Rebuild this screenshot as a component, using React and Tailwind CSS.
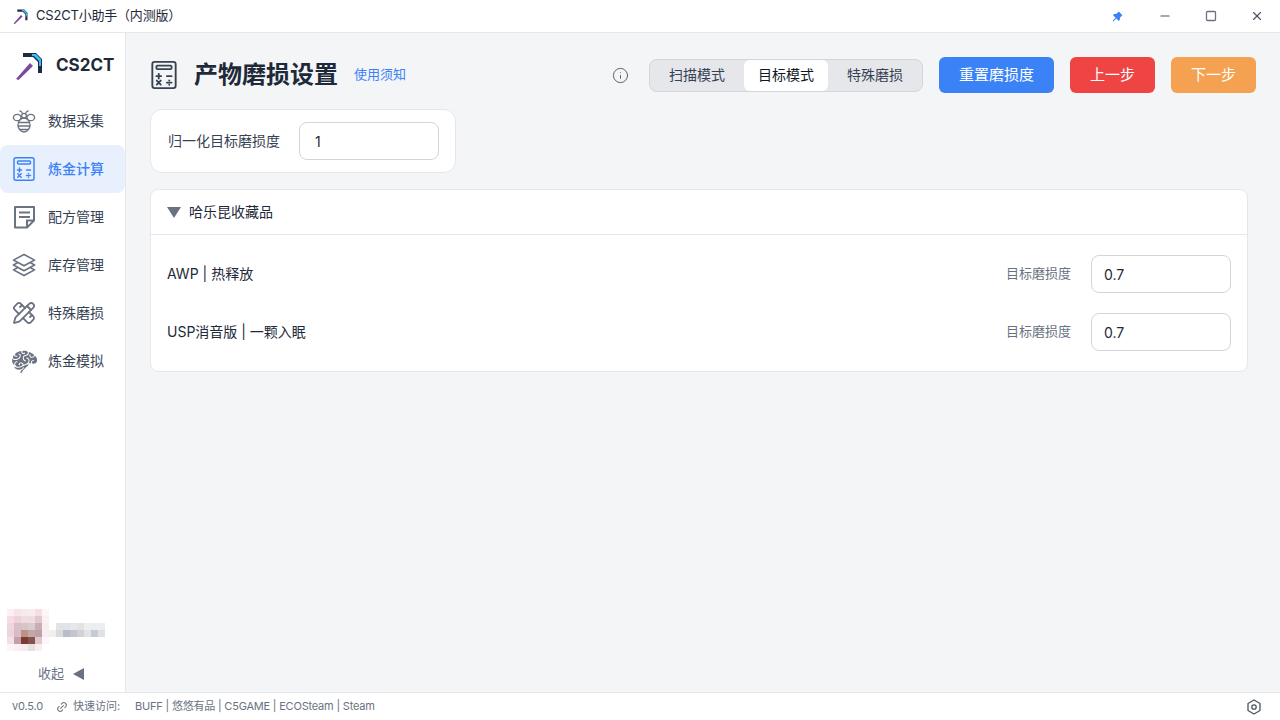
import React from 'react';
import { Minus, Square, X, PencilRuler, Info, Link2 } from 'lucide-react';
import { AiFillPushpin } from 'react-icons/ai';
import { GiBrain } from 'react-icons/gi';
import { HiOutlineSquare3Stack3D } from 'react-icons/hi2';

const fontStack = { fontFamily: '"Inter", "Noto Sans CJK SC", sans-serif' };

const Pickaxe = ({ size = 16 }) => (
    <svg width={size} height={size} viewBox="0 0 28 28" fill="none">
        <path d="M1 27 L15 11 L18 14 L3.5 28 Z" fill="#7a4a9c" />
        <path d="M8 1 H21 L27 7 V21 H23 V10 L18 5 H8 Z" fill="#1f2a44" />
        <path d="M17 2 H21 L26 7 V14 H24 V9 L19 4 H17 Z" fill="#38bdf8" />
    </svg>
);

const Calc = ({ size = 24, stroke = '#374151', width = 1.6 }) => (
    <svg width={size} height={size} viewBox="0 0 24 24" fill="none" stroke={stroke} strokeWidth={width} strokeLinecap="round">
        <rect x="2" y="0.8" width="20" height="22.4" rx="2" />
        <rect x="5.5" y="4" width="13" height="3" rx="1" />
        <path d="M5.5 13 H9.5 M7.5 11 V15 M14.5 13 H18.5 M5.8 16.8 L9.2 20.2 M9.2 16.8 L5.8 20.2 M14.5 18.5 H18.5" />
        <path d="M16.5 16.6 V16.7 M16.5 20.3 V20.4" />
    </svg>
);

const Bee = () => (
    <svg width="24" height="24" viewBox="0 0 24 24" fill="none" stroke="#6b7280" strokeWidth="1.3" strokeLinecap="round">
        <ellipse cx="12" cy="16" rx="6" ry="7" />
        <path d="M6.5 13.5 H17.5 M6.3 17 H17.7 M8.3 20.5 H15.7" />
        <circle cx="12" cy="6.8" r="2.4" />
        <ellipse cx="5.2" cy="8.5" rx="3.8" ry="3.2" />
        <ellipse cx="18.8" cy="8.5" rx="3.8" ry="3.2" />
        <path d="M10.5 4.6 C10 3 9 2 7.8 1.8 M13.5 4.6 C14 3 15 2 16.2 1.8" />
    </svg>
);

const Note = () => (
    <svg width="24" height="24" viewBox="0 0 24 24" fill="none" stroke="#6b7280" strokeWidth="2">
        <path d="M15 22.5 H3 V2 H22 V15.5 Z" strokeLinejoin="round" />
        <path d="M7 7.5 H18 M7 12 H18" />
        <path d="M15 22.5 V15.5 H22" />
    </svg>
);

const HexGear = () => (
    <svg width="16" height="16" viewBox="0 0 16 16" fill="none" stroke="#4b5563" strokeWidth="1.3">
        <path d="M8 1 L14 4.5 V11.5 L8 15 L2 11.5 V4.5 Z" strokeLinejoin="round" />
        <circle cx="8" cy="8" r="2.2" />
    </svg>
);

// pixelated avatar and name, 7px blocks as in the screenshot
const avatarBlocks = [
    ['#fdf0f3', '#f8e3e8', '#f7ebed', '#f9ecef', '#f5dfe4', '#fdf5f7'],
    ['#f5dde3', '#eed2da', '#efdcdf', '#eddde0', '#e3c7cf', '#fbf1f3'],
    ['#f0d5dc', '#d9c0c7', '#d8c3c9', '#dccbcd', '#c9adb5', '#f8eef0'],
    ['#ecd5da', '#d6bcc4', '#bd9285', '#c3a6a6', '#c0a0a8', '#f8eef0'],
    ['#f4dfe4', '#c49fa7', '#7c3a36', '#84544f', '#e2c6ce', '#fdf5f7'],
    ['#fdf4f6', '#fbeff2', '#f6ebed', '#e8e0e0', '#f9eef1', '#ffffff'],
];
const nameBlocks = [
    ['#ffffff', '#e1e3e7', '#e1e3e8', '#e6e7ea', '#e2e3e3', '#eceef0', '#eceef0', '#eceef0'],
    ['#f2f0ef', '#d9dcdb', '#b9bcc9', '#c3c6d0', '#d6d0d5', '#e0e4e2', '#c6cad6', '#dfe1e6'],
];

const PixelUser = () => (
    <svg width="112" height="42" viewBox="0 0 112 42" shapeRendering="crispEdges">
        {avatarBlocks.map((row, y) => row.map((c, x) => (
            <rect key={`a${x}${y}`} x={x * 7} y={y * 7} width="7" height="7" fill={c} />
        )))}
        {nameBlocks.map((row, y) => row.map((c, x) => (
            <rect key={`n${x}${y}`} x={42 + x * 7} y={14 + y * 7} width="7" height="7" fill={c} />
        )))}
    </svg>
);

const navItems = [
    { label: '数据采集', icon: <Bee /> },
    { label: '炼金计算', icon: <Calc stroke="#3b82f6" width={1.5} />, active: true },
    { label: '配方管理', icon: <Note /> },
    { label: '库存管理', icon: <HiOutlineSquare3Stack3D size={26} color="#6b7280" className="shrink-0" /> },
    { label: '特殊磨损', icon: <PencilRuler size={24} color="#6b7280" strokeWidth={1.8} className="shrink-0" /> },
    { label: '炼金模拟', icon: <GiBrain size={27} color="#6b7280" className="shrink-0" /> },
];

const WearInput = ({ value }) => (
    <input
        readOnly
        value={value}
        className="w-[140px] h-[38px] px-[12px] bg-white border border-gray-300 rounded-lg text-sm text-gray-800 outline-none"
    />
);

const ItemRow = ({ name }) => (
    <div className="flex items-center justify-between h-[38px]">
        <span className="text-sm text-gray-800">{name}</span>
        <div className="flex items-center gap-5">
            <span className="text-[13px] text-gray-500">目标磨损度</span>
            <WearInput value="0.7" />
        </div>
    </div>
);

export default function App() {
    return (
        <div className="w-[1280px] h-[720px] flex flex-col overflow-hidden bg-[#f4f5f7]" style={fontStack}>
            {/* title bar */}
            <div className="h-[33px] shrink-0 flex items-center bg-white border-b border-gray-200">
                <div className="flex items-center pl-[13px] gap-[8px] text-[13px] text-gray-800">
                    <Pickaxe size={15} />
                    <span className="tracking-[-0.2px]">CS2CT小助手（内测版）</span>
                </div>
                <div className="ml-auto flex items-center">
                    <div className="w-[46px] flex justify-center mr-[2px]"><AiFillPushpin size={13} color="#3b82f6" /></div>
                    <div className="w-[46px] flex justify-center"><Minus size={14} color="#4b5563" /></div>
                    <div className="w-[46px] flex justify-center"><Square size={12} color="#6b7280" strokeWidth={2.6} /></div>
                    <div className="w-[46px] flex justify-center"><X size={14} color="#4b5563" /></div>
                </div>
            </div>

            <div className="flex flex-1 min-h-0">
                {/* sidebar */}
                <aside className="w-[126px] shrink-0 bg-white border-r border-gray-200 flex flex-col">
                    <div className="h-[64px] flex items-center pl-[15px] pt-[1px] gap-[13px]">
                        <Pickaxe size={28} />
                        <span className="text-[17px] font-bold text-gray-800">CS2CT</span>
                    </div>
                    <nav className="flex flex-col">
                        {navItems.map((item) => (
                            <div
                                key={item.label}
                                className={item.active
                                    ? 'h-[48px] flex items-center pl-[12px] gap-[12px] rounded-lg bg-[#e8f0fe] text-[#3b82f6] font-medium text-sm'
                                    : 'h-[48px] flex items-center pl-[12px] gap-[12px] text-gray-700 text-sm'}
                            >
                                <span className="w-[24px] h-[24px] flex items-center justify-center">{item.icon}</span>
                                <span>{item.label}</span>
                            </div>
                        ))}
                    </nav>
                    <div className="mt-auto pl-[7px]">
                        <PixelUser />
                        <div className="h-[41px] flex items-center pl-[31px] pt-[4px] gap-[9px] text-[13px] text-gray-500">
                            <span>收起</span>
                            <span className="w-0 h-0 border-y-[6px] border-y-transparent border-r-[11px] border-r-gray-500" />
                        </div>
                    </div>
                </aside>

                {/* main */}
                <main className="flex-1 pt-[24px] pl-[24px] pr-[24px]">
                    <div className="flex items-center h-[36px]">
                        <Calc size={28} />
                        <h1 className="ml-[16px] text-2xl font-bold text-gray-800">产物磨损设置</h1>
                        <a className="ml-[16px] text-[13px] text-[#3b82f6]">使用须知</a>
                        <div className="ml-auto flex items-center">
                            <Info size={17} color="#4b5563" strokeWidth={1.3} className="mr-[20px]" />
                            <div className="flex h-[33px] bg-gray-200 border border-gray-300 rounded-lg text-sm">
                                <div className="w-[94px] flex items-center justify-center text-gray-700">扫描模式</div>
                                <div className="w-[84px] flex items-center justify-center bg-white rounded-md text-gray-900">目标模式</div>
                                <div className="w-[94px] flex items-center justify-center text-gray-700">特殊磨损</div>
                            </div>
                            <button className="ml-[16px] w-[115px] h-[36px] rounded-md bg-[#3b82f6] text-white text-[15px]">重置磨损度</button>
                            <button className="ml-[16px] w-[85px] h-[36px] rounded-md bg-[#ef4444] text-white text-[15px]">上一步</button>
                            <button className="ml-[16px] w-[85px] h-[36px] rounded-md bg-[#f4a151] text-white text-[15px]">下一步</button>
                        </div>
                    </div>

                    <div className="mt-[16px] w-[306px] h-[64px] flex items-center justify-between pl-[17px] pr-[16px] bg-white border border-gray-200 rounded-xl">
                        <span className="text-sm text-gray-700">归一化目标磨损度</span>
                        <input
                            readOnly
                            value="1"
                            className="w-[140px] h-[38px] px-[15px] bg-white border border-gray-300 rounded-lg text-sm text-gray-800 outline-none"
                        />
                    </div>

                    <div className="mt-[16px] mr-[8px] bg-white border border-gray-200 rounded-lg">
                        <div className="h-[45px] flex items-center pl-[16px] gap-[8px] border-b border-gray-200">
                            <span className="w-0 h-0 border-x-[7px] border-x-transparent border-t-[11px] border-t-gray-500" />
                            <span className="text-sm text-gray-800">哈乐昆收藏品</span>
                        </div>
                        <div className="flex flex-col gap-[20px] pt-[20px] pb-[20px] pl-[16px] pr-[16px]">
                            <ItemRow name="AWP | 热释放" />
                            <ItemRow name="USP消音版 | 一颗入眠" />
                        </div>
                    </div>
                </main>
            </div>

            {/* status bar */}
            <footer className="h-[28px] shrink-0 flex items-center bg-white border-t border-gray-200 pl-[12px] text-[11px] text-gray-500">
                <span className="tracking-[-0.2px]">v0.5.0</span>
                <Link2 size={12} color="#6b7280" className="ml-[13px] -rotate-45" />
                <span className="ml-[5px]">快速访问:</span>
                <span className="ml-[15px] tracking-[-0.2px]">BUFF | 悠悠有品 | C5GAME | ECOSteam | Steam</span>
                <span className="ml-auto mr-[18px]"><HexGear /></span>
            </footer>
        </div>
    );
}
